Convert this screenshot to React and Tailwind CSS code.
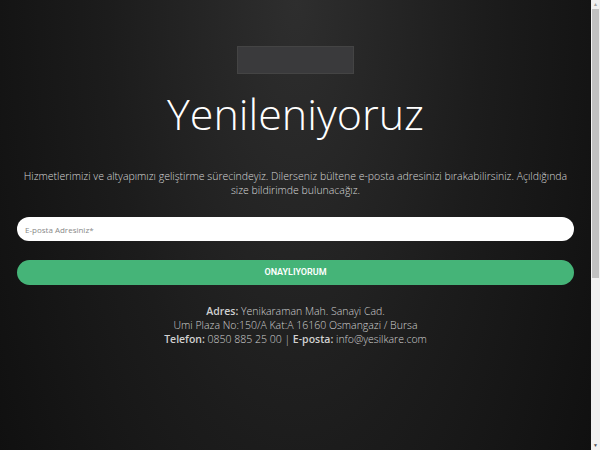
export default function App() {
  return (
    <div className="flex h-screen w-full overflow-hidden">
      <div
        className="h-[720px] flex-1 bg-[radial-gradient(ellipse_at_50%_0%,#2e2e2e_0%,#1c1c1c_45%,#0b0b0b_100%)] text-white"
        style={{ fontFamily: '"Open Sans", "DejaVu Sans", sans-serif' }}
      >
        <div className="flex flex-col items-center px-[17px] pt-[46px]">
          <div className="h-[28px] w-[117px] border border-[#444] bg-[#3a3a3c]" />
          <h1 className="mt-[13px] text-[43px] font-light leading-[54px]">
            Yenileniyoruz
          </h1>
          <p className="mt-[28px] text-center text-[10.5px] font-light leading-[14px] text-[#d6d6d6]">
            Hizmetlerimizi ve altyapımızı geliştirme sürecindeyiz. Dilerseniz bültene e-posta adresinizi bırakabilirsiniz. Açıldığında
            <br />
            size bildirimde bulunacağız.
          </p>
          <input
            placeholder="E-posta Adresiniz*"
            className="mt-[20px] h-[24px] w-full rounded-full bg-white px-[8px] text-[8px] text-[#333] placeholder:text-[#888] focus:outline-none"
          />
          <button
            className="mt-[19px] h-[25px] w-full rounded-full bg-[#45b478] text-[9px] font-semibold text-white"
            style={{ fontFamily: 'Roboto, sans-serif' }}
          >
            ONAYLIYORUM
          </button>
          <div className="mt-[19px] text-center text-[10.5px] font-light leading-[14px] text-[#d0d0d0]">
            <p><span className="font-semibold">Adres:</span> Yenikaraman Mah. Sanayi Cad.</p>
            <p>Umi Plaza No:150/A Kat:A 16160 Osmangazi / Bursa</p>
            <p>
              <span className="font-semibold">Telefon:</span> 0850 885 25 00 | <span className="font-semibold">E-posta:</span> info@yesilkare.com
            </p>
          </div>
        </div>
      </div>
      {/* scrollbar */}
      <div className="flex h-full w-[9px] flex-col bg-[#f1f1f1]">
        <div className="flex h-[9px] items-center justify-center text-[5px] leading-none text-[#a3a3a3]">▲</div>
        <div className="mx-[1px] h-[269px] bg-[#c1c1c1]" />
        <div className="flex-1" />
        <div className="flex h-[9px] items-center justify-center text-[5px] leading-none text-[#505050]">▼</div>
      </div>
    </div>
  )
}
